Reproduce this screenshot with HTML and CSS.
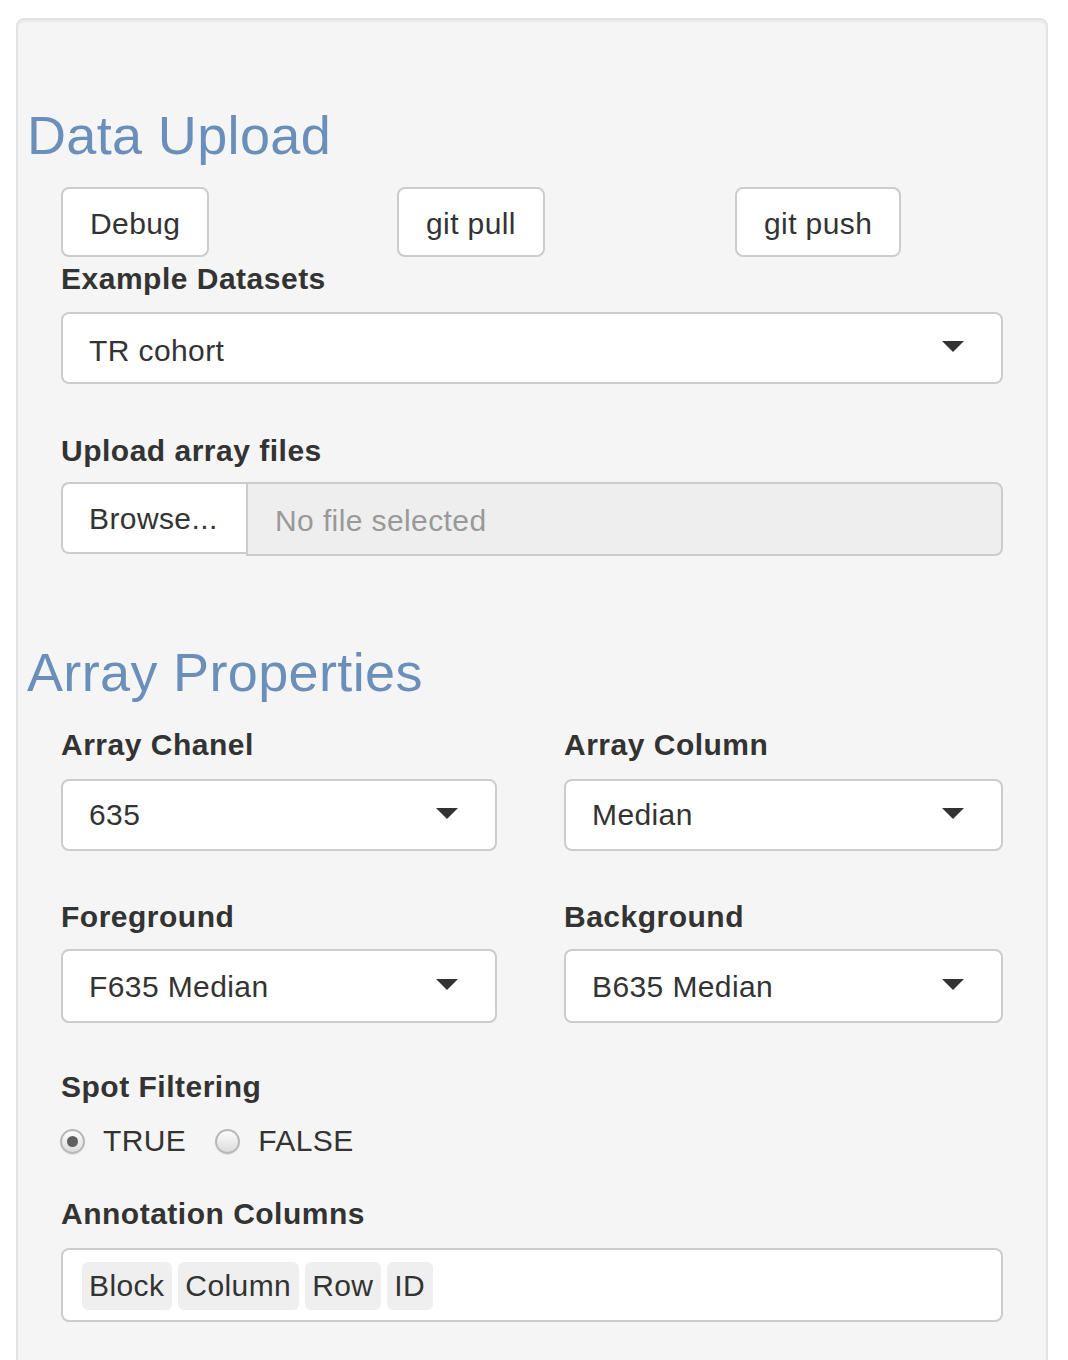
FILE: index.html
```html
<!DOCTYPE html>
<html>
<head>
<meta charset="utf-8">
<link rel="stylesheet" href="styles.css">
</head>
<body>
<div class="well">
  <h2 class="section-title">Data Upload</h2>
  <div class="fields">
    <div class="btn-row">
      <button class="btn">Debug</button>
      <button class="btn">git pull</button>
      <button class="btn">git push</button>
    </div>
    <div class="group g-example">
      <label class="lbl lbl-example">Example Datasets</label>
      <div class="select select-example"><span>TR cohort</span><span class="caret"></span></div>
    </div>
    <div class="group g-upload">
      <label class="lbl lbl-upload">Upload array files</label>
      <div class="file">
        <span class="browse">Browse...</span>
        <span class="file-name">No file selected</span>
      </div>
    </div>
  </div>
  <h2 class="section-title title-2">Array Properties</h2>
  <div class="fields">
    <div class="two-col row-1">
      <div class="group">
        <label class="lbl">Array Chanel</label>
        <div class="select"><span>635</span><span class="caret"></span></div>
      </div>
      <div class="group">
        <label class="lbl">Array Column</label>
        <div class="select"><span>Median</span><span class="caret"></span></div>
      </div>
    </div>
    <div class="two-col row-2">
      <div class="group">
        <label class="lbl lbl-fg">Foreground</label>
        <div class="select tall"><span>F635 Median</span><span class="caret"></span></div>
      </div>
      <div class="group">
        <label class="lbl lbl-fg">Background</label>
        <div class="select tall"><span>B635 Median</span><span class="caret"></span></div>
      </div>
    </div>
    <div class="group g-spot">
      <label class="lbl">Spot Filtering</label>
      <div class="radios">
        <span class="radio"><span class="circle checked"></span>TRUE</span>
        <span class="radio"><span class="circle"></span>FALSE</span>
      </div>
    </div>
    <div class="group g-annot">
      <label class="lbl">Annotation Columns</label>
      <div class="tags-box">
        <span class="tag">Block</span>
        <span class="tag">Column</span>
        <span class="tag">Row</span>
        <span class="tag">ID</span>
      </div>
    </div>
  </div>
</div>
</body>
</html>
```
FILE: styles.css
```css
html, body {
  margin: 0;
  padding: 0;
  background: #ffffff;
}
body {
  padding: 18px 20px 0 16px;
  font-family: "Liberation Sans", Arial, Helvetica, sans-serif;
  font-size: 30px;
  letter-spacing: 0.4px;
  color: #333333;
  overflow: hidden;
}
.well {
  background: #f5f5f5;
  border: 2px solid #e3e3e3;
  border-radius: 8px;
  box-shadow: inset 0 2px 2px rgba(0,0,0,0.05);
  padding: 86px 8px 60px 9px;
  min-height: 1400px;
}
.section-title {
  margin: 0;
  font-size: 54px;
  font-weight: normal;
  letter-spacing: 0.35px;
  line-height: 59px;
  color: #6a8fba;
}
.title-2 {
  margin-top: 87px;
}
.fields {
  padding: 0 35px 0 34px;
}
.btn-row {
  margin-top: 22px;
  display: grid;
  grid-template-columns: 336px 338px auto;
  justify-items: start;
}
.btn {
  font-family: inherit;
  font-size: 30px;
  letter-spacing: 0.4px;
  color: #333;
  background: #fff;
  border: 2px solid #cccccc;
  border-radius: 8px;
  height: 70px;
  padding: 3px 27px 0 27px;
  margin: 0;
  line-height: 1;
}
.lbl {
  display: block;
  font-weight: bold;
  letter-spacing: 0.5px;
  line-height: 42px;
  margin-bottom: 13px;
}
.lbl-example {
  padding-top: 2px;
  line-height: 40px;
}
.lbl-upload { margin-bottom: 10px; }
.lbl-fg { margin-bottom: 11px; }
.g-upload { margin-top: 46px; }
.select {
  box-sizing: border-box;
  height: 72px;
  background: #fff;
  border: 2px solid #cccccc;
  border-radius: 8px;
  display: flex;
  align-items: center;
  justify-content: space-between;
  padding: 0 37px 0 26px;
}
.select-example { padding-top: 5px; }
.select-example .caret { margin-top: -8px; }
.select.tall { height: 74px; padding-top: 2px; }
.caret {
  width: 0;
  height: 0;
  border-left: 11px solid transparent;
  border-right: 11px solid transparent;
  border-top: 11px solid #333;
  margin-top: -3px;
}
.select.tall .caret { margin-top: -5px; }
.file {
  display: flex;
  height: 74px;
}
.browse {
  box-sizing: border-box;
  width: 185px;
  height: 72px;
  background: #fff;
  border: 2px solid #cccccc;
  border-right: none;
  border-radius: 8px 0 0 8px;
  display: flex;
  align-items: center;
  padding-left: 26px;
  padding-top: 2px;
}
.file-name {
  flex: 1;
  box-sizing: border-box;
  height: 74px;
  background: #eeeeee;
  border: 2px solid #cccccc;
  border-radius: 0 8px 8px 0;
  display: flex;
  align-items: center;
  padding-left: 27px;
  padding-top: 4px;
  color: #999999;
}
.two-col {
  display: grid;
  grid-template-columns: 436px 439px;
  column-gap: 67px;
}
.row-1 { margin-top: 22px; }
.row-2 { margin-top: 45px; }
.g-spot { margin-top: 43px; }
.lbl + .radios { margin-top: -1px; }
.radios {
  display: flex;
  align-items: center;
  height: 42px;
}
.radio {
  display: flex;
  align-items: center;
  margin-right: 30px;
}
.circle {
  box-sizing: border-box;
  width: 25px;
  height: 25px;
  border-radius: 50%;
  border: 2px solid #b8b8b8;
  background: linear-gradient(#fdfdfd, #dcdcdc);
  margin-right: 18px;
  margin-left: -1px;
  display: flex;
  align-items: center;
  justify-content: center;
  box-shadow: 0 1px 1px rgba(0,0,0,0.08);
}
.circle.checked::after {
  content: "";
  width: 11px;
  height: 11px;
  border-radius: 50%;
  background: #5f5f5f;
}
.g-annot { margin-top: 31px; }
.tags-box {
  box-sizing: border-box;
  height: 74px;
  background: #fff;
  border: 2px solid #cccccc;
  border-radius: 8px;
  display: flex;
  align-items: center;
  gap: 6px;
  padding: 0 19px;
}
.tag {
  background: #efefef;
  border-radius: 6px;
  height: 48px;
  padding: 0 8px 0 7px;
  display: flex;
  align-items: center;
  margin-top: 1px;
}
```
